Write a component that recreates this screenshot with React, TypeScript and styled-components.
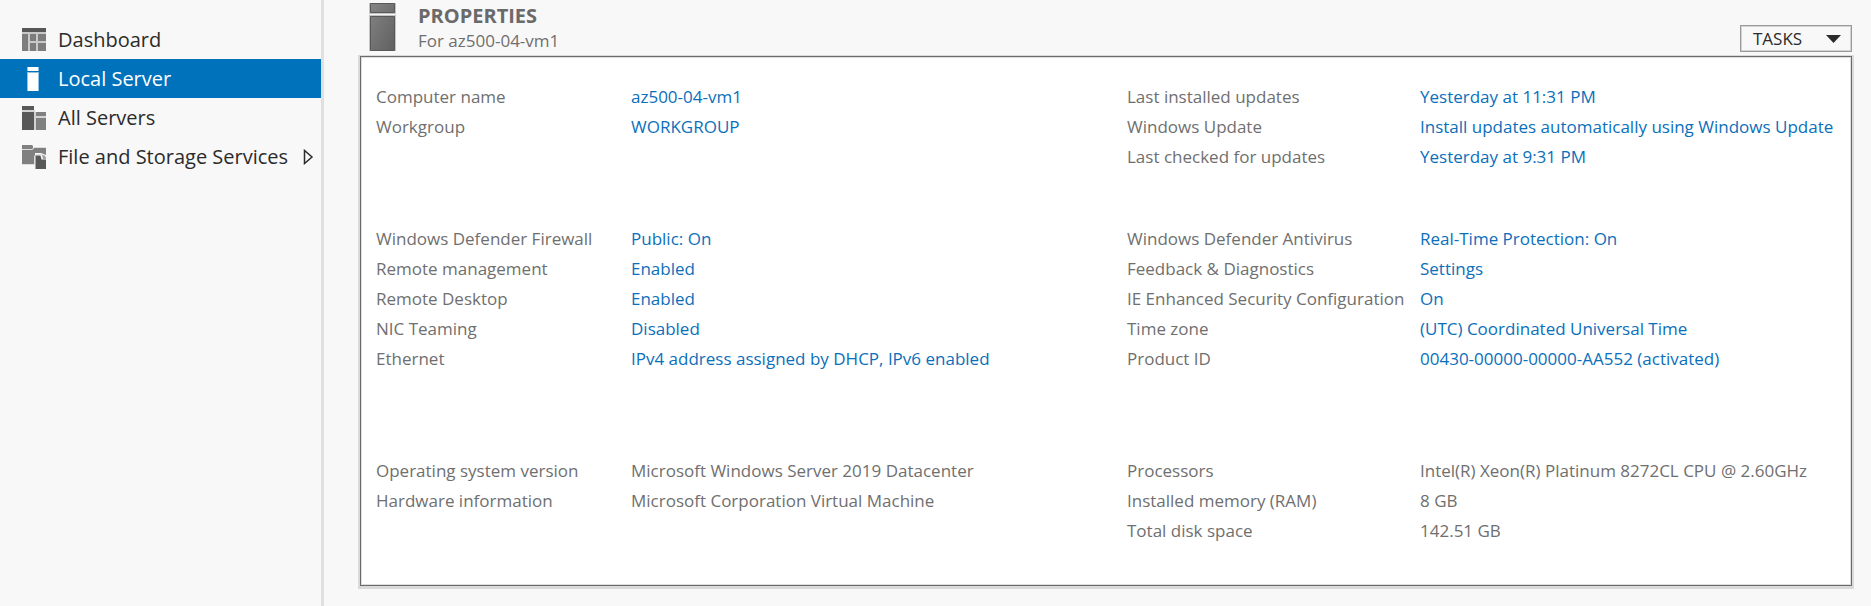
import React from "react";
import styled, { createGlobalStyle, css } from "styled-components";

const GlobalStyle = createGlobalStyle`
  * { box-sizing: border-box; }
  body {
    margin: 0;
    background: #f8f8f8;
    color: #2b2b2b;
    font-family: "Segoe UI", "Open Sans", "Noto Sans", sans-serif;
  }
`;

const Shell = styled.div`
  display: flex;
  min-height: 100vh;
`;

const Sidebar = styled.nav`
  flex: 0 0 324px;
  padding-top: 20px;
  border-right: 3px solid #e0e0e0;
`;

const NavList = styled.ul`
  margin: 0;
  padding: 0;
  list-style: none;
`;

const NavLink = styled.a<{ $active?: boolean }>`
  display: flex;
  align-items: center;
  gap: 12px;
  height: 39px;
  padding: 0 7px 0 22px;
  font-size: 20px;
  line-height: 24px;
  white-space: nowrap;
  text-decoration: none;
  color: ${(p) => (p.$active ? "#ffffff" : "#2b2b2b")};
  background: ${(p) => (p.$active ? "#0072bc" : "transparent")};
`;

const NavLabel = styled.span`
  flex: 1;
`;

const Main = styled.main`
  flex: 1;
  min-width: 0;
  padding: 2px 17px 16px 34px;
`;

const Header = styled.header`
  display: flex;
  justify-content: space-between;
  align-items: flex-end;
  height: 53px;
  padding: 0 2px 3px 11px;
`;

const Heading = styled.div`
  display: flex;
  align-self: flex-start;
  gap: 22px;
`;

const Title = styled.h1`
  margin: 0;
  font-size: 20px;
  line-height: 27px;
  font-weight: 700;
  color: #6a6a6a;
`;

const Subtitle = styled.p`
  margin: 0;
  font-size: 17px;
  line-height: 24px;
  color: #6f6f6f;
`;

const TasksButton = styled.button`
  display: flex;
  align-items: center;
  justify-content: space-between;
  width: 112px;
  height: 27px;
  padding: 0 10px 0 12px;
  border: 1px solid #9a9a9a;
  outline: 1px solid #d4d4d4;
  outline-offset: -2px;
  background: #f8f8f8;
  color: #2b2b2b;
  font-family: inherit;
  font-size: 17px;
  line-height: 24px;
`;

const Frame = styled.section`
  border: solid #dadada;
  border-width: 1px 2px 3px;
`;

const Panel = styled.div`
  display: flex;
  flex-direction: column;
  padding: 25px 0 39px 15px;
  border: 1px solid #6b6b6b;
  background: #ffffff;
  box-shadow: inset 0 0 0 1px #dedede;
`;

const Group = styled.div<{ $gap?: number }>`
  display: grid;
  grid-template-columns: minmax(0, 751fr) minmax(0, 724fr);
  margin-bottom: ${(p) => p.$gap ?? 0}px;
`;

const Properties = styled.dl<{ $labelWidth: number }>`
  display: grid;
  grid-template-columns: ${(p) => p.$labelWidth}px minmax(0, 1fr);
  grid-auto-rows: 30px;
  align-content: start;
  margin: 0;
  font-size: 17px;
  line-height: 30px;
  white-space: nowrap;
  color: #6f6f6f;
`;

const textCell = css`
  margin: 0;
`;

const Label = styled.dt`
  ${textCell}
`;

const Value = styled.dd`
  ${textCell}
`;

const ValueLink = styled.a`
  color: #0b6fbb;
  text-decoration: none;
`;

const DashboardIcon = () => (
  <svg width="24" height="24" viewBox="0 0 24 24" aria-hidden="true">
    <path fill="#c9c9c9" d="M0 4h24v19H0z" />
    <path fill="#585858" d="M0 0h24v4H0z" />
    <path fill="#7d7d7d" d="M0 6h6v17H0zM8 6h6v7H8zM16 6h8v7h-8zM8 15h6v8H8zM16 15h8v8h-8z" />
  </svg>
);

const LocalIcon = () => (
  <svg width="24" height="24" viewBox="0 0 24 24" aria-hidden="true">
    <path fill="#8fc3e6" d="M5 0h12v24H5z" />
    <path fill="#0072bc" d="M5 4h12v1H5z" />
    <path fill="#fff" d="M6 0h10v4H6zM6 6h10v18H6z" />
  </svg>
);

const AllIcon = () => (
  <svg width="24" height="24" viewBox="0 0 24 24" aria-hidden="true">
    <path fill="#d2d2d2" d="M0 4h13v2h11v18H0z" />
    <path fill="#585858" d="M0 0h12v4H0zM0 6h12v18H0z" />
    <path fill="#808080" d="M14 6h10v4H14zM14 12h10v12H14z" />
  </svg>
);

const StorageIcon = () => (
  <svg width="24" height="24" viewBox="0 0 24 24" aria-hidden="true">
    <path fill="#808080" d="M0 0h10l1 1v3H0zM0 5h10l2-2h12v7l-5-2h-6v11H0z" />
    <path fill="none" stroke="#dedede" d="M0 4.500h10l2-2h12M0 19.500h12.500v-8q0-2 3-2h5q3 1 3 4" />
    <path fill="#585858" d="M13.500 10.500h5l1 4h4.500V24H13.500z" />
    <path fill="#a0a0a0" d="M20 10q4 0 4 4h-3z" />
  </svg>
);

const ServerIcon = () => (
  <svg width="27" height="49" viewBox="0 0 27 49" aria-hidden="true">
    <defs>
      <linearGradient id="serverFace" x1="0" y1="0" x2="1" y2="1">
        <stop offset="0" stopColor="#848484" />
        <stop offset="1" stopColor="#606060" />
      </linearGradient>
    </defs>
    <path fill="#c4c4c4" d="M0 1h27v48H0z" />
    <path fill="#f4f4f4" d="M0 12h27v1H0z" />
    <g fill="url(#serverFace)" stroke="#595959">
      <path d="M1.500 1.500h24v9h-24zM1.500 14.500h24v34h-24z" />
    </g>
  </svg>
);

const Expander = () => (
  <svg width="11" height="16" viewBox="0 0 11 16" aria-hidden="true">
    <path fill="none" stroke="#2b2b2b" strokeWidth="1.500" d="M1.500 1.500v13L9 8z" />
  </svg>
);

const Caret = () => (
  <svg width="15" height="8" viewBox="0 0 15 8" aria-hidden="true">
    <path fill="#2b2b2b" d="M0 0h15L7.500 8z" />
  </svg>
);

type Item = { label: string; value: string };

const nav = [
  { label: "Dashboard", Icon: DashboardIcon },
  { label: "Local Server", Icon: LocalIcon, active: true },
  { label: "All Servers", Icon: AllIcon },
  { label: "File and Storage Services", Icon: StorageIcon, expandable: true },
];

const groups: { left: Item[]; right: Item[]; links: boolean; gap?: number }[] = [
  {
    links: true,
    gap: 52,
    left: [
      { label: "Computer name", value: "az500-04-vm1" },
      { label: "Workgroup", value: "WORKGROUP" },
    ],
    right: [
      { label: "Last installed updates", value: "Yesterday at 11:31 PM" },
      { label: "Windows Update", value: "Install updates automatically using Windows Update" },
      { label: "Last checked for updates", value: "Yesterday at 9:31 PM" },
    ],
  },
  {
    links: true,
    gap: 82,
    left: [
      { label: "Windows Defender Firewall", value: "Public: On" },
      { label: "Remote management", value: "Enabled" },
      { label: "Remote Desktop", value: "Enabled" },
      { label: "NIC Teaming", value: "Disabled" },
      { label: "Ethernet", value: "IPv4 address assigned by DHCP, IPv6 enabled" },
    ],
    right: [
      { label: "Windows Defender Antivirus", value: "Real-Time Protection: On" },
      { label: "Feedback & Diagnostics", value: "Settings" },
      { label: "IE Enhanced Security Configuration", value: "On" },
      { label: "Time zone", value: "(UTC) Coordinated Universal Time" },
      { label: "Product ID", value: "00430-00000-00000-AA552 (activated)" },
    ],
  },
  {
    links: false,
    left: [
      { label: "Operating system version", value: "Microsoft Windows Server 2019 Datacenter" },
      { label: "Hardware information", value: "Microsoft Corporation Virtual Machine" },
    ],
    right: [
      { label: "Processors", value: "Intel(R) Xeon(R) Platinum 8272CL CPU @ 2.60GHz" },
      { label: "Installed memory (RAM)", value: "8 GB" },
      { label: "Total disk space", value: "142.51 GB" },
    ],
  },
];

function PropertyList({ items, links, labelWidth }: { items: Item[]; links: boolean; labelWidth: number }) {
  return (
    <Properties $labelWidth={labelWidth}>
      {items.map((item) => (
        <React.Fragment key={item.label}>
          <Label>{item.label}</Label>
          <Value>{links ? <ValueLink href="#">{item.value}</ValueLink> : item.value}</Value>
        </React.Fragment>
      ))}
    </Properties>
  );
}

export default function App() {
  return (
    <>
      <GlobalStyle />
      <Shell>
        <Sidebar>
          <NavList>
            {nav.map(({ label, Icon, active, expandable }) => (
              <li key={label}>
                <NavLink href="#" $active={active} aria-current={active ? "page" : undefined}>
                  <Icon />
                  <NavLabel>{label}</NavLabel>
                  {expandable && <Expander />}
                </NavLink>
              </li>
            ))}
          </NavList>
        </Sidebar>
        <Main>
          <Header>
            <Heading>
              <ServerIcon />
              <div>
                <Title>PROPERTIES</Title>
                <Subtitle>For az500-04-vm1</Subtitle>
              </div>
            </Heading>
            <TasksButton type="button">
              TASKS
              <Caret />
            </TasksButton>
          </Header>
          <Frame>
            <Panel>
              {groups.map((group, index) => (
                <Group key={index} $gap={group.gap}>
                  <PropertyList items={group.left} links={group.links} labelWidth={255} />
                  <PropertyList items={group.right} links={group.links} labelWidth={293} />
                </Group>
              ))}
            </Panel>
          </Frame>
        </Main>
      </Shell>
    </>
  );
}
